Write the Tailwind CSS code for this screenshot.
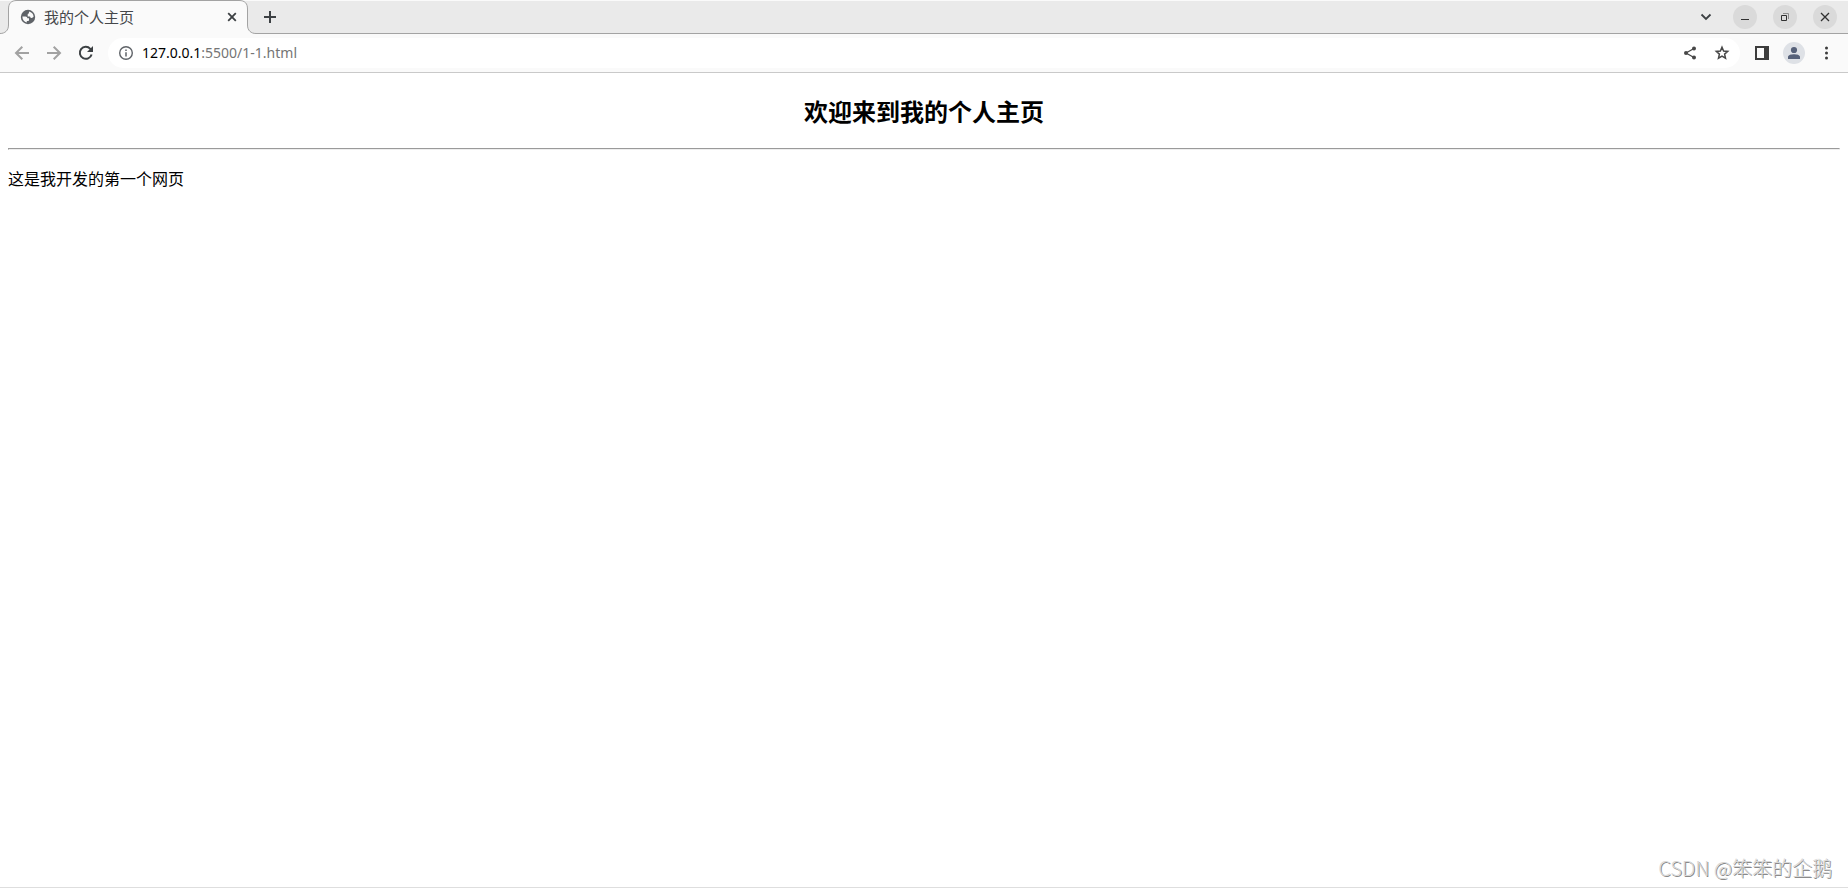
<!DOCTYPE html>
<html lang="zh-CN">
<head>
    <meta charset="UTF-8">
    <meta name="viewport" content="width=device-width, initial-scale=1.0">
    <title>我的个人主页</title>
    <script src="https://cdn.jsdelivr.net/npm/@tailwindcss/browser@4"></script>
</head>
<body class="flex min-h-screen flex-col bg-white pb-px font-['Noto_Sans','Noto_Sans_CJK_SC',sans-serif] text-black">
    <!-- Tab strip -->
    <header class="flex h-[34px] items-center bg-[#eaeaea] shadow-[inset_0_1px_0_#fafafa,inset_0_-1px_0_#a3a3a3]">
        <div class="relative flex h-[34px] w-64 items-center pl-5 pr-4">
            <svg class="absolute inset-0" width="256" height="34" viewBox="0 0 256 34" fill="none">
                <path d="M0 34V33.5C5 33.5 8.500 30.500 8.500 25V9C8.500 3.500 11 .5 17 .5H239C245 .5 247.500 3.500 247.500 9V25C247.500 30.500 251 33.500 256 33.500V34Z" fill="#fafafa"/>
                <path d="M0 33.5C5 33.5 8.500 30.500 8.500 25V9C8.500 3.500 11 .5 17 .5H239C245 .5 247.500 3.500 247.500 9V25C247.500 30.500 251 33.500 256 33.500" stroke="#a3a3a3"/>
            </svg>
            <svg class="relative" width="16" height="16" viewBox="0 0 16 16">
                <circle cx="8" cy="8" r="7.200" fill="#5f6368"/>
                <path d="M2.400 7.500H5.500C6.800 7.500 7.300 8.200 7.300 9.300H9V11C9 11.600 8.500 12 7.900 12H6.800V13.500C4.300 13 2.300 10.900 2.400 7.500ZM9 2.500C11.600 3 13.500 5 13.600 7.800C13 8.700 12.200 9 11.300 8.900C10.500 8.800 10.100 8.300 10.100 7.500H7.700V5.600C7.700 5 8.200 4.600 8.900 4.600Z" fill="#fafafa"/>
            </svg>
            <span class="relative ml-2 flex-1 text-[15px] leading-5 text-[#45474a]">我的个人主页</span>
            <button class="relative flex size-4 items-center justify-center" aria-label="关闭标签页">
                <svg width="16" height="16" viewBox="0 0 16 16" stroke="#3c4043" stroke-width="1.800"><path d="M4.200 4.200L11.800 11.800M11.800 4.200L4.200 11.800"/></svg>
            </button>
        </div>
        <button class="flex h-7 w-7 items-center justify-center" aria-label="新标签页">
            <svg width="14" height="14" viewBox="0 0 14 14" stroke="#3c4043" stroke-width="2"><path d="M7 1V13M1 7H13"/></svg>
        </button>
        <div class="ml-auto flex items-center gap-4 pr-[11px]">
            <button class="mr-[3px] flex h-6 w-4 items-center justify-center" aria-label="搜索标签页">
                <svg width="12" height="12" viewBox="0 0 12 12" fill="none" stroke="#3c4043" stroke-width="1.800"><path d="M1.500 3.500L6 8L10.500 3.500"/></svg>
            </button>
            <button class="size-6 rounded-full bg-[#dadada]" aria-label="最小化">
                <svg width="24" height="24" viewBox="0 0 24 24" stroke="#303030"><path d="M8 14.500H16"/></svg>
            </button>
            <button class="size-6 rounded-full bg-[#dadada]" aria-label="还原">
                <svg width="24" height="24" viewBox="0 0 24 24" fill="none"><path d="M10 8.500H15.500V14" stroke="#8c8c8c"/><path d="M8.500 10.500H13.500V15.500H8.500Z" stroke="#303030"/></svg>
            </button>
            <button class="size-6 rounded-full bg-[#dadada]" aria-label="关闭">
                <svg width="24" height="24" viewBox="0 0 24 24" stroke="#303030" stroke-width="1.300"><path d="M8 8L16 16M16 8L8 16"/></svg>
            </button>
        </div>
    </header>

    <!-- Toolbar -->
    <nav class="flex h-[39px] items-center border-b border-[#c9c9c9] bg-[#fafafa] px-[6px]">
        <button class="flex size-8 items-center justify-center" aria-label="后退">
            <svg width="16" height="16" viewBox="0 0 16 16" fill="none" stroke="#a2a2a2" stroke-width="2"><path d="M15 8H2.500M8.300 1.700L2 8L8.300 14.300"/></svg>
        </button>
        <button class="flex size-8 items-center justify-center" aria-label="前进">
            <svg width="16" height="16" viewBox="0 0 16 16" fill="none" stroke="#a2a2a2" stroke-width="2"><path d="M1 8H13.500M7.700 1.700L14 8L7.700 14.300"/></svg>
        </button>
        <button class="flex size-8 items-center justify-center" aria-label="重新加载">
            <svg width="16" height="16" viewBox="0 0 16 16" fill="none"><path d="M13.600 9.500A6 6 0 1 1 12.300 3.800L14 5.500" stroke="#3c4043" stroke-width="2"/><path d="M15 1V7H9Z" fill="#3c4043"/></svg>
        </button>
        <div class="mx-[6px] flex h-[30px] flex-1 items-center rounded-full bg-white pl-[11px] pr-[2px]">
            <svg width="14" height="14" viewBox="0 0 14 14" fill="none"><circle cx="7" cy="7" r="6.300" stroke="#5f6368" stroke-width="1.400"/><path d="M7 6.200V10.500M7 3.500V5" stroke="#5f6368" stroke-width="1.500"/></svg>
            <a href="#" class="ml-[9px] flex-1 text-sm leading-5 text-[#757575]"><span class="text-black">127.0.0.1</span>:5500/1-1.html</a>
            <button class="flex size-8 items-center justify-center" aria-label="分享">
                <svg width="14" height="14" viewBox="0 0 14 14" fill="#474747"><path d="M11 2.500L3 7L11 11.500" fill="none" stroke="#474747" stroke-width="1.300"/><circle cx="11" cy="2.500" r="2"/><circle cx="3" cy="7" r="2"/><circle cx="11" cy="11.500" r="2"/></svg>
            </button>
            <button class="flex size-8 items-center justify-center" aria-label="添加书签">
                <svg width="16" height="16" viewBox="0 0 16 16" fill="none" stroke="#474747" stroke-width="1.500"><path d="M8 2.200L9.600 6L13.700 6.400L10.600 9.100L11.500 13.100L8 11L4.500 13.100L5.400 9.100L2.300 6.400L6.400 6Z"/></svg>
            </button>
        </div>
        <button class="flex size-8 items-center justify-center" aria-label="侧边栏">
            <svg width="14" height="14" viewBox="0 0 14 14" fill="none"><path d="M1 1H13V13H1Z" stroke="#3c3c3c" stroke-width="2"/><path d="M9 0H14V14H9Z" fill="#3c3c3c"/></svg>
        </button>
        <button class="flex size-8 items-center justify-center" aria-label="用户">
            <svg width="22" height="22" viewBox="0 0 22 22"><circle cx="11" cy="11" r="11" fill="#dee1e6"/><circle cx="11" cy="8" r="3.100" fill="#566179"/><path d="M5 17V15C5 13 8.500 12.300 11 12.300S17 13 17 15V17Z" fill="#566179"/></svg>
        </button>
        <button class="flex size-8 items-center justify-center" aria-label="菜单">
            <svg width="4" height="14" viewBox="0 0 4 14" fill="#3c3c3c"><circle cx="2.500" cy="2" r="1.500"/><circle cx="2.500" cy="7" r="1.500"/><circle cx="2.500" cy="12" r="1.500"/></svg>
        </button>
    </nav>

    <!-- Page content -->
    <main class="flex flex-1 flex-col border-b border-[#dedede] px-2 pt-[21px]">
        <h2 class="text-center text-2xl leading-9 font-bold">欢迎来到我的个人主页</h2>
        <hr class="mt-[18px] h-[2px] border border-[#eeeeee] border-t-[#9a9a9a] border-l-[#9a9a9a]">
        <p class="mt-[17px] text-base leading-6">这是我开发的第一个网页</p>
        <p class="mt-auto mr-2 self-end pb-[3px] text-xl leading-8 font-light text-[#d8d8d8] font-['Noto_Sans_CJK_SC',sans-serif] [text-shadow:1px_1px_0_#8a8a8a]">CSDN @笨笨的企鹅</p>
    </main>
</body>
</html>
